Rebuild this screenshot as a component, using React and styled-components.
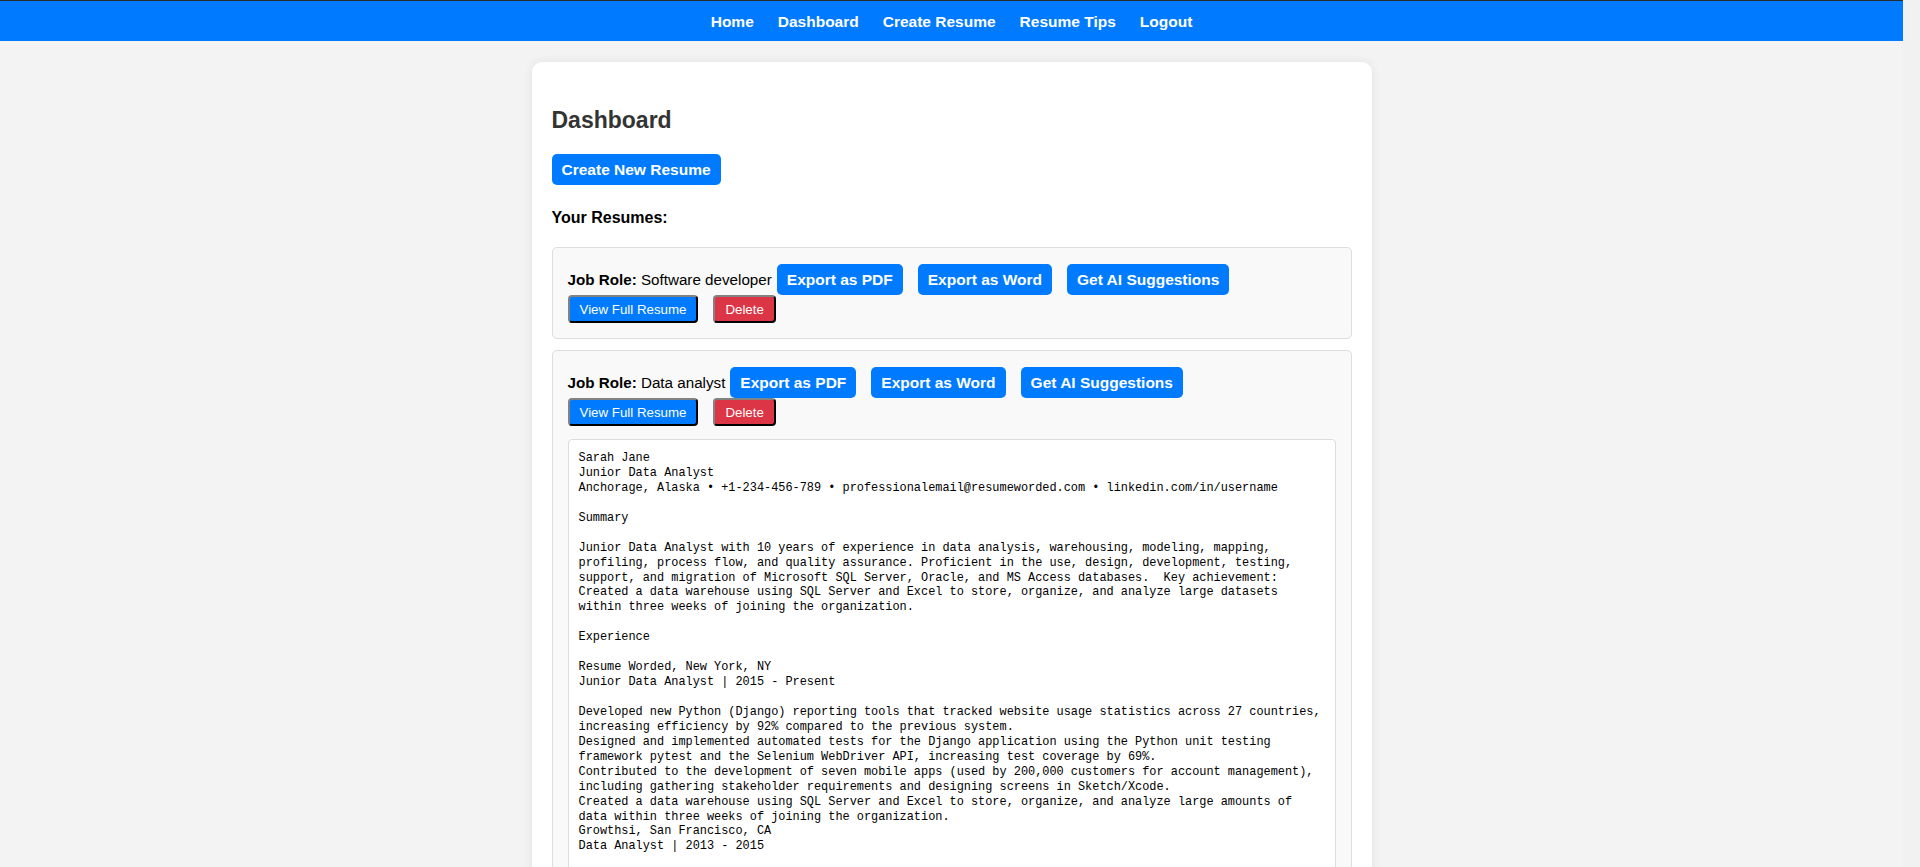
import React, { useState } from 'react'
import styled, { createGlobalStyle } from 'styled-components'

const GlobalStyle = createGlobalStyle`
  html {
    background-color: #f1f1f1;
  }
  body {
    margin: 0 17px 0 0;
    padding: 0;
    background-color: #f3f3f3;
    font-family: "Liberation Sans", Arial, sans-serif;
  }
`;

const Nav = styled.nav`
  height: 38px;
  padding-top: 2px;
  border-top: 1px solid #2b2b2b;
  background-color: #007bff;
  display: flex;
  align-items: center;
  justify-content: center;
`;

const NavLink = styled.a`
  color: #fff;
  font-weight: 700;
  font-size: 15.5px;
  margin: 0 12px;
  text-decoration: none;
  cursor: pointer;
`;

const Container = styled.div`
  max-width: 800px;
  margin: 21px auto 40px;
  padding: 20px;
  background-color: #fff;
  border-radius: 10px;
  box-shadow: 0 0 10px rgba(0, 0, 0, 0.08);
`;

const Title = styled.h2`
  margin: 25px 0 20px;
  font-size: 23px;
  color: #333;
`;

const Button = styled.button`
  padding: 5px 10px;
  margin-right: ${({ $gap }) => $gap || 0}px;
  border: none;
  border-radius: 5px;
  background-color: #007bff;
  color: #fff;
  font-family: "Liberation Sans", Arial, sans-serif;
  font-size: 15.5px;
  font-weight: 700;
  line-height: 21px;
  cursor: pointer;
`;

const SubTitle = styled.h3`
  margin: 24px 0 20px;
  font-size: 16px;
  color: #000;
`;

const Card = styled.div`
  background-color: #f9f9f9;
  border: 1px solid #ddd;
  border-radius: 5px;
  padding: 16px 15px 15px;
  margin-bottom: 11px;
`;

const Row = styled.div`
  display: flex;
  align-items: center;
  height: ${({ $h }) => $h}px;
`;

const Role = styled.p`
  margin: 0 5px 0 0;
  font-size: 15.2px;
  color: #000;
`;

const SmallButton = styled.button`
  padding: 0 10px;
  height: 28px;
  margin-right: 15px;
  border: 2px outset #2e2e2e;
  border-radius: 4px;
  background-color: ${({ $danger }) => ($danger ? '#dc3545' : '#007bff')};
  color: #fff;
  font-family: "Liberation Sans", Arial, sans-serif;
  font-size: 13.3px;
  cursor: pointer;
`;

const Preview = styled.pre`
  margin: 13px 0 0;
  padding: 11px 8px 10px 10px;
  background-color: #fff;
  border: 1px solid #ddd;
  border-radius: 4px;
  font-family: "Liberation Mono", "DejaVu Sans Mono", monospace;
  font-size: 11.9px;
  line-height: 14.93px;
  color: #000;
  white-space: pre-wrap;
`;

const sarah = `Sarah Jane
Junior Data Analyst
Anchorage, Alaska • +1-234-456-789 • professionalemail@resumeworded.com • linkedin.com/in/username

Summary

Junior Data Analyst with 10 years of experience in data analysis, warehousing, modeling, mapping,
profiling, process flow, and quality assurance. Proficient in the use, design, development, testing,
support, and migration of Microsoft SQL Server, Oracle, and MS Access databases.  Key achievement:
Created a data warehouse using SQL Server and Excel to store, organize, and analyze large datasets
within three weeks of joining the organization.

Experience

Resume Worded, New York, NY
Junior Data Analyst | 2015 - Present

Developed new Python (Django) reporting tools that tracked website usage statistics across 27 countries,
increasing efficiency by 92% compared to the previous system.
Designed and implemented automated tests for the Django application using the Python unit testing
framework pytest and the Selenium WebDriver API, increasing test coverage by 69%.
Contributed to the development of seven mobile apps (used by 200,000 customers for account management),
including gathering stakeholder requirements and designing screens in Sketch/Xcode.
Created a data warehouse using SQL Server and Excel to store, organize, and analyze large amounts of
data within three weeks of joining the organization.
Growthsi, San Francisco, CA
Data Analyst | 2013 - 2015

Analyzed sales and marketing data to identify trends, reducing reporting turnaround time by 35%.
Built automated dashboards in Tableau used by 40+ stakeholders across 5 departments.

Education

University of Alaska, Anchorage
Bachelor of Science in Statistics | 2013`;

const resumes = [
  { id: 1, jobRole: 'Software developer', content: '' },
  { id: 2, jobRole: 'Data analyst', content: sarah },
];

const links = ['Home', 'Dashboard', 'Create Resume', 'Resume Tips', 'Logout'];

const App = () => {
  const [open, setOpen] = useState({ 2: true });

  return (
    <>
      <GlobalStyle />
      <Nav>
        {links.map(l => <NavLink key={l}>{l}</NavLink>)}
      </Nav>
      <Container>
        <Title>Dashboard</Title>
        <Button>Create New Resume</Button>
        <SubTitle>Your Resumes:</SubTitle>
        {resumes.map(r => (
          <Card key={r.id}>
            <Row $h={31}>
              <Role><strong>Job Role:</strong> {r.jobRole}</Role>
              <Button $gap={15}>Export as PDF</Button>
              <Button $gap={15}>Export as Word</Button>
              <Button>Get AI Suggestions</Button>
            </Row>
            <Row $h={28}>
              <SmallButton onClick={() => setOpen({ ...open, [r.id]: !open[r.id] })}>View Full Resume</SmallButton>
              <SmallButton $danger>Delete</SmallButton>
            </Row>
            {open[r.id] && r.content && <Preview>{r.content}</Preview>}
          </Card>
        ))}
      </Container>
    </>
  )
}

export default App
